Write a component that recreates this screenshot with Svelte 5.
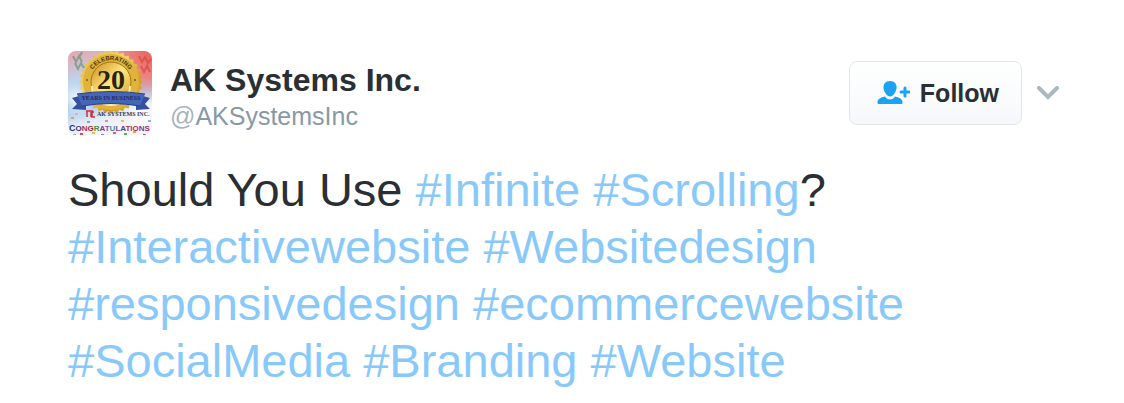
<script lang="ts">
  const user = { name: 'AK Systems Inc.', handle: 'AKSystemsInc' };

  // teeth of the gold seal
  const seal = Array.from({ length: 64 }, (_, i) => {
    const r = i % 2 ? 29 : 32;
    const a = (i / 64) * Math.PI * 2;
    return `${(43 + r * Math.cos(a)).toFixed(1)},${(31 + r * Math.sin(a)).toFixed(1)}`;
  }).join(' ');

  const letters = [
    ['O', '#3d2f86'], ['N', '#c22a4d'], ['G', '#a01f3c'], ['R', '#4e8d3c'], ['A', '#7b3b8d'],
    ['T', '#8e4fa0'], ['U', '#3c8f9d'], ['L', '#7c4a91'], ['A', '#42469b'], ['T', '#a83c3c'],
    ['I', '#ae3152'], ['O', '#bd2f3a'], ['N', '#7b3b9b'], ['S', '#9a326e']
  ];

  const confetti = [
    [3, 66, '#e7a13d'], [12, 82, '#d8495f'], [24, 81, '#e9c14a'], [33, 83, '#5c9bd8'],
    [45, 81, '#d95a96'], [56, 82, '#59b26b'], [65, 80, '#e7a13d'], [75, 83, '#d8495f'],
    [80, 69, '#86b9e6'], [7, 62, '#f0a6c0'], [37, 69, '#dd8bb4'], [19, 70, '#7bb48a'],
    [53, 69, '#e0c070'], [5, 83, '#65a9d6']
  ];

  let following = $state(false);
</script>

<article class="tweet">
  <header class="header">
    <a class="account" href="#profile">
      <svg class="avatar" viewBox="0 0 84 84" aria-hidden="true">
        <defs>
          <linearGradient id="sky" x1="0" y1="0" x2="0.3" y2="1">
            <stop offset="0" stop-color="#e9a3a8" />
            <stop offset="0.35" stop-color="#bcd5ee" />
            <stop offset="0.6" stop-color="#94bee8" />
            <stop offset="0.85" stop-color="#e6eef8" />
            <stop offset="1" stop-color="#f5f3f5" />
          </linearGradient>
          <radialGradient id="corner" cx="1" cy="0" r="0.6">
            <stop offset="0" stop-color="#e8625a" />
            <stop offset="0.55" stop-color="#ec8683" />
            <stop offset="1" stop-color="#eaa4ac" stop-opacity="0" />
          </radialGradient>
          <radialGradient id="glow">
            <stop offset="0" stop-color="#fff" stop-opacity="0.9" />
            <stop offset="1" stop-color="#fff" stop-opacity="0" />
          </radialGradient>
          <linearGradient id="gold" x1="0" y1="0" x2="1" y2="1">
            <stop offset="0" stop-color="#e2b333" />
            <stop offset="0.4" stop-color="#f3d76d" />
            <stop offset="0.7" stop-color="#d69c22" />
            <stop offset="1" stop-color="#e9bf46" />
          </linearGradient>
          <linearGradient id="disc" x1="0" y1="0" x2="1" y2="1">
            <stop offset="0" stop-color="#c98c19" />
            <stop offset="0.5" stop-color="#ffe682" />
            <stop offset="1" stop-color="#d49a27" />
          </linearGradient>
          <path id="arc" d="M21 31a22 22 0 0 1 44 0" />
        </defs>
        <rect width="84" height="84" fill="url(#sky)" />
        <rect width="84" height="84" fill="url(#corner)" />
        <circle cx="8" cy="48" r="18" fill="url(#glow)" />
        <circle cx="74" cy="62" r="18" fill="url(#glow)" />
        <path d="M5 5l3 6 3-6 3 6M7 12l3 6 3-6 3 5M14 1l-2 4" fill="none" stroke="#548e77" stroke-width="2" opacity="0.6" />
        <path d="M71 5l3 6 3-5 3 6 3-4M73 15l3 6 3-6 3 6" fill="none" stroke="#d63f3b" stroke-width="2" opacity="0.6" />

        <polygon points={seal} fill="url(#gold)" />
        <circle cx="43" cy="31" r="28" fill="#dfb33c" />
        <circle cx="43" cy="31" r="20" fill="url(#disc)" stroke="#a97313" />
        <path d="M24 35a19 19 0 0 0 38 0" fill="none" stroke="#fff0a1" stroke-width="2" />
        <text class="arc-text"><textPath href="#arc" startOffset="50%" text-anchor="middle">CELEBRATING</textPath></text>
        <circle cx="19" cy="29" r="1" fill="#7f5911" />
        <circle cx="67" cy="29" r="1" fill="#7f5911" />
        <text class="years" x="43" y="38" text-anchor="middle">20</text>

        <path d="M4 47l14-4v16L4 58l5-5zM82 47l-14-4v16l14-1-5-5z" fill="#354f9e" />
        <path d="M9 43q34-5 68 0l-5 12q-29-5-58 0z" fill="#4466b9" />
        <path d="M9 43q34-5 68 0M14 55q29-5 58 0" fill="none" stroke="#25418d" />
        <text class="ribbon-text" x="43" y="49" text-anchor="middle">YEARS IN BUSINESS</text>

        <path d="M18 60h7M19 60v6M23 61v5M26 61h-2v5h3" fill="none" stroke="#cc2f3b" stroke-width="1.500" />
        <text class="company" x="29" y="65">AK SYSTEMS INC.</text>

        {#each confetti as [x, y, fill]}
          <rect {x} {y} width="3" height="2" {fill} />
        {/each}
        <text class="congrats" x="1" y="80"><tspan class="initial">C</tspan>{#each letters as [c, fill]}<tspan {fill}>{c}</tspan>{/each}</text>
      </svg>
      <span class="names">
        <strong class="name">{user.name}</strong>
        <span class="handle"><span class="at">@</span>{user.handle}</span>
      </span>
    </a>

    <div class="actions">
      <button class="follow" type="button" aria-pressed={following} onclick={() => (following = !following)}>
        <svg class="follow-icon" viewBox="0 0 33 24" aria-hidden="true">
          <path d="M13 0c4.500 0 7 3 6.500 7.500C19 11 16 15.500 13 15.500S7 11 6.500 7.500C6 3 8.500 0 13 0z" />
          <path d="M8 15.500c1 2 3 3 5 3s4-1 5-3c4.500 1 7.500 2.500 7.500 6v.5q0 1-1 1h-23q-1 0-1-1v-.5c0-3.500 3-5 7.500-6z" />
          <path d="M28 7v8M24 11h8" class="plus" />
        </svg>
        Follow
      </button>
      <button class="more" type="button" aria-label="More">
        <svg viewBox="0 0 22 14" aria-hidden="true"><path d="M2 2l9 9 9-9" /></svg>
      </button>
    </div>
  </header>

  <p class="text">
    Should You Use <a href="#Infinite">#Infinite</a> <a href="#Scrolling">#Scrolling</a>?
    <a href="#Interactivewebsite">#Interactivewebsite</a>
    <a href="#Websitedesign">#Websitedesign</a>
    <a href="#responsivedesign">#responsivedesign</a>
    <a href="#ecommercewebsite">#ecommercewebsite</a>
    <a href="#SocialMedia">#SocialMedia</a>
    <a href="#Branding">#Branding</a>
    <a href="#Website">#Website</a>
  </p>
</article>

<style>
  :global(body) { margin: 0; background: #fff; }

  .tweet {
    padding: 51px 62px 14px 68px;
    font-family: Arial, "Liberation Sans", sans-serif;
    color: #292f33;
  }

  a { text-decoration: none; }

  .header {
    display: flex;
    justify-content: space-between;
    align-items: center;
  }

  .account { display: flex; align-items: center; gap: 18px; color: inherit; }
  .avatar { width: 84px; height: 84px; border-radius: 8px; flex: none; }
  .names { display: flex; flex-direction: column; padding-top: 6px; }
  .name { font-size: 32px; line-height: 40px; }
  .handle { font-size: 25px; line-height: 32px; color: #8899a6; }
  .at { color: #a6b3bd; }

  .actions { display: flex; align-items: center; gap: 12px; }

  .follow {
    display: flex;
    align-items: center;
    gap: 10px;
    height: 64px;
    padding: 0 22px 0 27px;
    border: 1px solid #e1e8ed;
    border-radius: 8px;
    background: linear-gradient(#fff, #f5f8fa);
    color: #292f33;
    font-family: inherit;
    font-size: 25px;
    font-weight: bold;
    cursor: pointer;
  }
  .follow-icon { width: 33px; height: 24px; fill: #1da1f2; }
  .plus { stroke: #1da1f2; stroke-width: 3; stroke-linecap: round; }

  .more { display: flex; padding: 3px; border: 0; background: none; cursor: pointer; }
  .more svg { width: 22px; height: 14px; }
  .more path { fill: none; stroke: #aab8c2; stroke-width: 4; stroke-linecap: round; }

  .text { margin: 26px 0 0; font-size: 47px; line-height: 57px; }
  .text a { color: #89c9fa; }

  /* avatar lettering */
  .arc-text { font-size: 6px; font-weight: bold; fill: #4a3509; }
  .years { font: bold 28px "Liberation Serif", serif; fill: #2b2413; }
  .ribbon-text { font: bold 6px "Liberation Serif", serif; fill: #1e2a66; }
  .company { font: bold 6px "Liberation Serif", serif; fill: #3b3551; }
  .congrats { font-size: 8px; font-weight: bold; }
  .initial { font-size: 9px; fill: #27306f; }
</style>
